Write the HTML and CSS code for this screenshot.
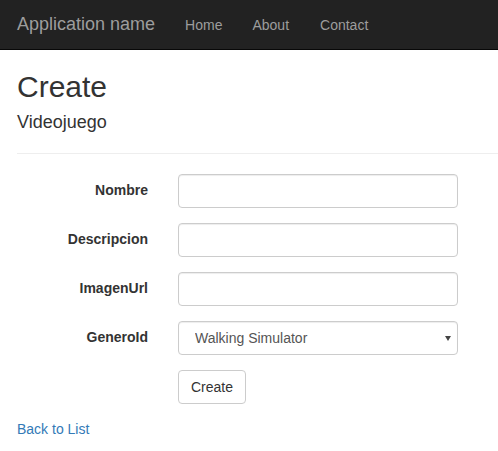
FILE: index.html
```
<!DOCTYPE html>
<html>
<head>
    <title>Create - Videojuego</title>
    <link rel="stylesheet" href="styles.css">
</head>
<body>
    <div class="navbar">
        <a class="navbar-brand" href="#">Application name</a>
        <ul class="nav">
            <li><a href="#">Home</a></li>
            <li><a href="#">About</a></li>
            <li><a href="#">Contact</a></li>
        </ul>
    </div>

    <div class="container">
        <h2>Create</h2>

        <form class="form-horizontal">
            <h4>Videojuego</h4>
            <hr>

            <div class="form-group">
                <label class="control-label" for="Nombre">Nombre</label>
                <div class="field">
                    <input class="form-control" type="text" id="Nombre">
                </div>
            </div>

            <div class="form-group">
                <label class="control-label" for="Descripcion">Descripcion</label>
                <div class="field">
                    <input class="form-control" type="text" id="Descripcion">
                </div>
            </div>

            <div class="form-group">
                <label class="control-label" for="ImagenUrl">ImagenUrl</label>
                <div class="field">
                    <input class="form-control" type="text" id="ImagenUrl">
                </div>
            </div>

            <div class="form-group">
                <label class="control-label" for="GeneroId">GeneroId</label>
                <div class="field">
                    <div class="select-wrap">
                        <select class="form-control" id="GeneroId">
                            <option>Walking Simulator</option>
                        </select>
                    </div>
                </div>
            </div>

            <div class="form-group">
                <span class="control-label"></span>
                <div class="field">
                    <button type="button" class="btn">Create</button>
                </div>
            </div>
        </form>

        <div class="back">
            <a href="#">Back to List</a>
        </div>
    </div>
</body>
</html>
```

FILE: styles.css
```
body {
    margin: 0;
    font-family: "Liberation Sans", Arial, sans-serif;
    font-size: 14px;
    line-height: 1.42857;
    color: #333;
    background: #fff;
}
a {
    color: #337ab7;
    text-decoration: none;
}
.navbar {
    display: flex;
    box-sizing: border-box;
    height: 50px;
    background: #222;
    border-bottom: 1px solid #080808;
    padding-left: 2px;
}
.navbar-brand {
    color: #9d9d9d;
    font-size: 18px;
    line-height: 20px;
    padding: 14px 15px 15px;
}
.nav {
    display: flex;
    list-style: none;
    margin: 0;
    padding: 0;
}
.nav a {
    display: block;
    color: #9d9d9d;
    line-height: 20px;
    padding: 15px;
}
.nav li:last-child a {
    padding-left: 16px;
}
.container {
    padding: 0 0 0 17px;
}
h2 {
    font-size: 30px;
    font-weight: 500;
    line-height: 1.1;
    margin: 20px 0 10px;
}
h4 {
    font-size: 18px;
    font-weight: 500;
    line-height: 1.1;
    margin: 10px 0 10px;
}
hr {
    border: 0;
    border-top: 1px solid #eee;
    margin: 20px 0;
}
.form-group {
    display: flex;
    margin-bottom: 15px;
}
.control-label {
    width: 131px;
    padding: 7px 15px 0 0;
    text-align: right;
    font-weight: bold;
}
.field {
    padding-left: 15px;
}
.form-control {
    display: block;
    box-sizing: border-box;
    width: 280px;
    height: 34px;
    padding: 6px 12px;
    font-family: inherit;
    font-size: 14px;
    color: #555;
    background: #fff;
    border: 1px solid #ccc;
    border-radius: 4px;
    box-shadow: inset 0 1px 1px rgba(0,0,0,0.075);
}
.select-wrap {
    position: relative;
    width: 280px;
}
.select-wrap select {
    -webkit-appearance: none;
    appearance: none;
    padding-left: 16px;
}
.select-wrap::after {
    content: "";
    position: absolute;
    right: 7px;
    top: 15px;
    border-left: 3px solid transparent;
    border-right: 3px solid transparent;
    border-top: 5px solid #444;
    pointer-events: none;
}
.btn {
    height: 34px;
    padding: 6px 12px;
    font-family: inherit;
    font-size: 14px;
    color: #333;
    background: #fff;
    border: 1px solid #ccc;
    border-radius: 4px;
    cursor: pointer;
}
.back {
    line-height: 20px;
}
```
